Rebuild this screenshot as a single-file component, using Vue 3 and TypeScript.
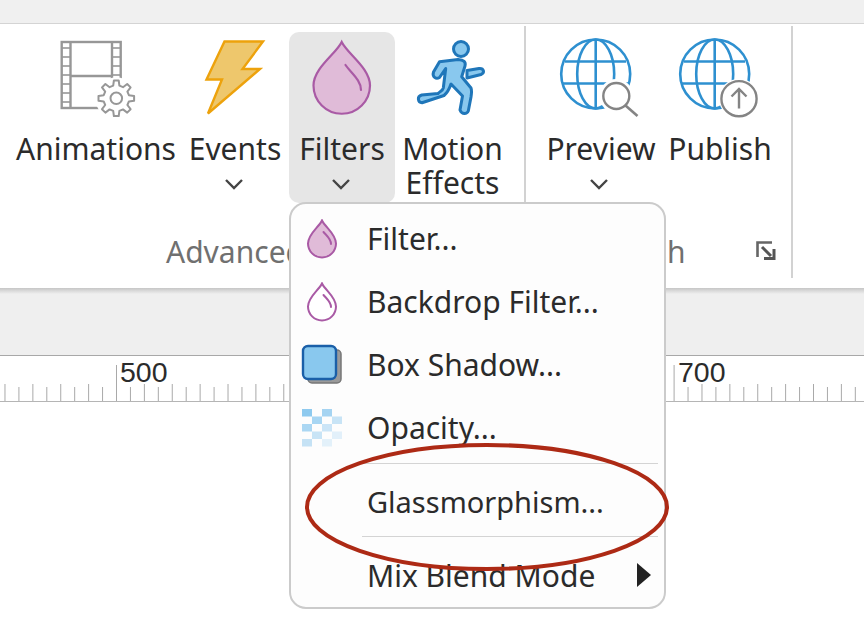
<script setup lang="ts">
const buildGear = (cx: number, cy: number) => {
  const teeth = 8
  const points: string[] = []
  for (let i = 0; i < teeth; i++) {
    const a = (i / teeth) * Math.PI * 2
    const step = Math.PI / teeth
    const spots: [number, number][] = [
      [13, a - step * 0.62],
      [18, a - step * 0.34],
      [18, a + step * 0.34],
      [13, a + step * 0.62]
    ]
    for (const [r, t] of spots) {
      points.push(`${(cx + r * Math.cos(t)).toFixed(1)},${(cy + r * Math.sin(t)).toFixed(1)}`)
    }
  }
  return points.join(' ')
}
const gearPoints = buildGear(116.3, 98.3)

const sprockets = [44, 53, 62, 71, 80, 89, 98]

const checker = [
  { x: 0, y: 0, c: '#8ecaef' },
  { x: 20, y: 0, c: '#a5d4f2' },
  { x: 10, y: 7.5, c: '#a8d6f3' },
  { x: 30, y: 7.5, c: '#c8e4f6' },
  { x: 0, y: 15, c: '#abd7f3' },
  { x: 20, y: 15, c: '#cbe5f7' },
  { x: 10, y: 22.5, c: '#c8e4f6' },
  { x: 30, y: 22.5, c: '#e2f0fa' },
  { x: 0, y: 30, c: '#c5e2f5' },
  { x: 20, y: 30, c: '#e3f1fa' }
]

const tickStep = 13.94
const ticks = Array.from({ length: 62 }, (_, i) => {
  const n = i - 8
  const x = 116.5 + n * tickStep
  let top = 31
  if (n % 20 === 0) top = 9
  else if (n % 2 === 0) top = 28
  return { x, top }
})
</script>

<template>
  <div class="page">
    <div class="topbar"></div>

    <div class="ribbon">
      <section class="group group-advanced">
        <div class="buttons">
          <div class="tool w-animations">
            <svg class="icon" viewBox="11 36 170 84">
              <g fill="none" stroke="#979797" stroke-width="2.4">
                <rect x="61.7" y="42" width="59" height="66" />
                <line x1="70.5" y1="42" x2="70.5" y2="108" />
                <line x1="112" y1="42" x2="112" y2="108" />
                <line x1="70.5" y1="76" x2="112" y2="76" />
              </g>
              <g stroke="#979797" stroke-width="1.6">
                <line v-for="y in sprockets" :key="y" x1="62" :y1="y + 4" x2="70" :y2="y + 4" />
                <line v-for="y in sprockets" :key="'r' + y" x1="112" :y1="y + 4" x2="121" :y2="y + 4" />
              </g>
              <circle cx="116.3" cy="98.3" r="21" fill="#fff" />
              <polygon :points="gearPoints" fill="#fff" stroke="#979797" stroke-width="2" stroke-linejoin="round" />
              <circle cx="116.3" cy="98.3" r="5.8" fill="#fff" stroke="#979797" stroke-width="2" />
            </svg>
            <span class="label">Animations</span>
          </div>
          <div class="tool w-events">
            <svg class="icon" viewBox="181 36 108 84">
              <polygon points="224.5,41.5 263,41.5 242.5,69 260,69 208,113.5 222,79.5 206.5,79.5" fill="#eec76c" stroke="#eda20c" stroke-width="2.4" />
            </svg>
            <span class="label">Events</span>
            <svg class="chevron" viewBox="0 0 20 12"><path d="M2 2 L10 10 L18 2" /></svg>
          </div>
          <div class="tool w-filters active">
            <svg class="icon" viewBox="289 36 106 84">
              <path d="M341.7 42 C336 54 313.5 68 313.5 85.5 A28.2 28.2 0 0 0 370 85.5 C370 68 347.5 54 341.7 42 Z" fill="#e0bbd8" stroke="#a95aa5" stroke-width="2.2" />
              <path d="M345.5 65 C351 73 361 80 361 90" fill="none" stroke="#a95aa5" stroke-width="2.2" stroke-linecap="round" />
            </svg>
            <span class="label">Filters</span>
            <svg class="chevron" viewBox="0 0 20 12"><path d="M2 2 L10 10 L18 2" /></svg>
          </div>
          <div class="tool w-motion">
            <svg class="icon" viewBox="395 36 115 84">
              <g fill="#89c8ee" stroke="#1f76b9" stroke-width="3" stroke-linejoin="round">
                <circle cx="461" cy="49" r="7.5" />
                <path d="M439.5 61.7 L458 59.5 C464 60 466 62 465 66 L461.7 76.7 L471 88 C472 91 471.5 94 471 97 L468.3 111 C467 114 462 115 460 110 L462.5 96 L451 84 C449 90 447 93 444 95.5 L422 102.7 C418 102.5 416.5 96.5 421.7 95 L438 93.5 C441 91 443 90 443.3 88 L445.7 68.5 L439.5 77.5 C436 79.5 432 77 433.5 72 Z" />
                <path d="M467 70.5 L479 68.5 C484 68 485 73 481 74.5 L467 78 Z" />
              </g>
            </svg>
            <span class="label">Motion<br />Effects</span>
          </div>
        </div>
        <div class="group-name name-advanced">Advanced</div>
      </section>

      <section class="group group-publish">
        <div class="buttons">
          <div class="tool w-preview">
            <svg class="icon" viewBox="541 36 120 84">
              <g fill="none" stroke="#2e90d0" stroke-width="2.6">
                <circle cx="596.7" cy="74" r="34.5" />
                <ellipse cx="596.7" cy="74" rx="18.5" ry="34.5" />
                <line x1="596.7" y1="39.5" x2="596.7" y2="108.5" />
                <line x1="566" y1="61.5" x2="627" y2="61.5" />
                <line x1="563" y1="83.5" x2="630" y2="83.5" />
              </g>
              <circle cx="617.3" cy="96" r="17" fill="#fff" />
              <circle cx="617.3" cy="96" r="13" fill="#fff" stroke="#848484" stroke-width="2.4" />
              <line x1="626.5" y1="105.5" x2="638.5" y2="116" stroke="#848484" stroke-width="2.6" />
            </svg>
            <span class="label shifted">Preview</span>
            <svg class="chevron" viewBox="0 0 20 12"><path d="M2 2 L10 10 L18 2" /></svg>
          </div>
          <div class="tool w-publish">
            <svg class="icon" viewBox="661 36 118 84">
              <g fill="none" stroke="#2e90d0" stroke-width="2.6">
                <circle cx="715.7" cy="74" r="34.5" />
                <ellipse cx="715.7" cy="74" rx="18.5" ry="34.5" />
                <line x1="715.7" y1="39.5" x2="715.7" y2="108.5" />
                <line x1="685" y1="61.5" x2="746" y2="61.5" />
                <line x1="682" y1="83.5" x2="749" y2="83.5" />
              </g>
              <circle cx="740" cy="98.7" r="20" fill="#fff" />
              <circle cx="740" cy="98.7" r="17.6" fill="#fff" stroke="#848484" stroke-width="2.4" />
              <path d="M740 108.5 L740 89 M732.5 96.5 L740 89 L747.5 96.5" fill="none" stroke="#848484" stroke-width="2.4" />
            </svg>
            <span class="label shifted">Publish</span>
          </div>
        </div>
        <div class="group-foot">
          <div class="group-name name-publish">Publish</div>
          <svg class="launcher" viewBox="0 0 20 20">
            <path d="M1.5 16 L1.5 1.5 L16 1.5" fill="none" stroke="#666" stroke-width="2.6" />
            <path d="M6 6 L15 15 M8 17.5 L18 17.5 L18 8" fill="none" stroke="#555" stroke-width="3" />
          </svg>
        </div>
      </section>
    </div>

    <div class="band"></div>

    <div class="ruler">
      <svg class="ruler-svg" viewBox="0 0 864 46">
        <line v-for="t in ticks" :key="t.x" :x1="t.x" :y1="t.top" :x2="t.x" y2="45" stroke="#a9a9a9" stroke-width="1" />
        <line x1="0" y1="45.5" x2="864" y2="45.5" stroke="#b5b5b5" stroke-width="1" />
        <text x="120" y="26" class="ruler-num">500</text>
        <text x="678" y="26" class="ruler-num">700</text>
      </svg>
    </div>

    <div class="menu">
      <div class="menu-row">
        <span class="menu-icon">
          <svg width="32" height="40" viewBox="0 0 32 40">
            <path d="M16 1.5 C13 8 2 15 2 24.5 A14 14 0 0 0 30 24.5 C30 15 19 8 16 1.5 Z" fill="#e0bbd8" stroke="#a95aa5" stroke-width="2" />
            <path d="M17.5 13 C21 17 25 20 25 25" fill="none" stroke="#a95aa5" stroke-width="2" stroke-linecap="round" />
          </svg>
        </span>
        <span>Filter...</span>
      </div>
      <div class="menu-row">
        <span class="menu-icon">
          <svg width="32" height="40" viewBox="0 0 32 40">
            <path d="M16 1.5 C13 8 2 15 2 24.5 A14 14 0 0 0 30 24.5 C30 15 19 8 16 1.5 Z" fill="#fff" stroke="#a95aa5" stroke-width="2" />
            <path d="M17.5 13 C21 17 25 20 25 25" fill="none" stroke="#a95aa5" stroke-width="2" stroke-linecap="round" />
          </svg>
        </span>
        <span>Backdrop Filter...</span>
      </div>
      <div class="menu-row">
        <span class="menu-icon">
          <svg width="42" height="42" viewBox="0 0 42 42">
            <rect x="7" y="6" width="33" height="33" rx="4" fill="#9a9a9a" stroke="#777" stroke-width="1.5" />
            <rect x="2" y="2" width="33" height="33" rx="5" fill="#89c8ee" stroke="#1a5fa8" stroke-width="2.4" />
          </svg>
        </span>
        <span>Box Shadow...</span>
      </div>
      <div class="menu-row">
        <span class="menu-icon">
          <svg width="40" height="38" viewBox="0 0 40 38">
            <rect v-for="c in checker" :key="c.x + '-' + c.y" :x="c.x" :y="c.y" width="10" height="7.5" :fill="c.c" />
          </svg>
        </span>
        <span>Opacity...</span>
      </div>
      <div class="menu-sep"></div>
      <div class="menu-row row-tall">
        <span class="menu-icon"></span>
        <span>Glassmorphism...</span>
      </div>
      <div class="menu-sep"></div>
      <div class="menu-row row-last">
        <span class="menu-icon"></span>
        <span>Mix Blend Mode</span>
        <span class="arrow"></span>
      </div>
    </div>

    <svg class="circle-mark" viewBox="0 0 372 130">
      <ellipse cx="182" cy="63" rx="180" ry="62" fill="none" stroke="#ad2a15" stroke-width="4" />
    </svg>
  </div>
</template>

<style scoped>
.page {
  position: relative;
  width: 864px;
  height: 642px;
  overflow: hidden;
  background: #fff;
  font-family: "Noto Sans", "Open Sans", sans-serif;
  color: #2b2b2b;
}

.topbar {
  height: 23px;
  background: #f0f0f0;
  border-bottom: 1px solid #d4d4d4;
}

.ribbon {
  display: flex;
  height: 264px;
  background: #fff;
  padding-top: 2px;
  box-sizing: border-box;
}

.group {
  position: relative;
  height: 252px;
  border-right: 2px solid #d2d2d2;
  box-sizing: border-box;
}

.group-advanced {
  width: 526px;
  padding-left: 11px;
}

.group-publish {
  width: 267px;
  padding-left: 14px;
}

.buttons {
  display: flex;
  padding-top: 6px;
}

.tool {
  display: flex;
  flex-direction: column;
  align-items: center;
  height: 171px;
  padding-top: 4px;
  box-sizing: border-box;
  border-radius: 10px;
}

.tool.active {
  background: #e6e6e6;
}

.w-animations { width: 170px; }
.w-events { width: 108px; }
.w-filters { width: 106px; }
.w-motion { width: 115px; }
.w-preview { width: 120px; }
.w-publish { width: 118px; }

.icon {
  display: block;
  width: 100%;
  height: 84px;
  flex: none;
}

.label {
  margin-top: 12px;
  font-size: 30px;
  line-height: 34px;
  text-align: center;
  white-space: nowrap;
}

.label.shifted {
  margin-left: 2px;
}

.chevron {
  width: 20px;
  height: 12px;
  margin-top: 12px;
  margin-right: 2px;
  fill: none;
  stroke: #444;
  stroke-width: 2.4;
}

.group-name {
  font-size: 30px;
  line-height: 34px;
  color: #707070;
  white-space: nowrap;
}

.name-advanced {
  margin-top: 32px;
  padding-left: 155px;
}

.group-foot {
  display: flex;
  align-items: center;
  margin-top: 32px;
  padding-left: 42px;
}

.launcher {
  width: 20px;
  height: 20px;
  margin-left: 70px;
  margin-top: -2px;
}

.band {
  height: 68px;
  box-sizing: border-box;
  background: linear-gradient(#c6c6c6, #efefef 6px);
  border-bottom: 1px solid #a8a8a8;
}

.ruler {
  height: 46px;
  background: #fff;
}

.ruler-svg {
  display: block;
  width: 864px;
  height: 46px;
}

.ruler-num {
  font-family: "Liberation Sans", sans-serif;
  font-size: 28.5px;
  fill: #2b2b2b;
}

.menu {
  position: absolute;
  left: 289px;
  top: 202px;
  width: 377px;
  height: 407px;
  box-sizing: border-box;
  padding-top: 3px;
  background: #fdfdfd;
  border: 2px solid #cbcbcb;
  border-radius: 17px;
  font-size: 30px;
}

.menu-row {
  display: flex;
  align-items: center;
  height: 63px;
}

.row-tall {
  height: 68px;
  padding-top: 6px;
  box-sizing: border-box;
  font-size: 29px;
}

.row-last {
  height: 64px;
  margin-top: 6px;
}

.menu-icon {
  display: flex;
  justify-content: center;
  align-items: center;
  flex: none;
  width: 62px;
  margin-right: 14px;
}

.menu-sep {
  height: 1px;
  margin: 4px 6px 0 71px;
  background: #d4d4d4;
}

.arrow {
  margin-left: auto;
  margin-right: 13px;
  border-left: 14px solid #222;
  border-top: 12.5px solid transparent;
  border-bottom: 12.5px solid transparent;
}

.circle-mark {
  position: absolute;
  left: 305px;
  top: 444px;
  width: 372px;
  height: 130px;
  overflow: visible;
}
</style>

<style>
html, body {
  margin: 0;
  background: #fff;
}
</style>
